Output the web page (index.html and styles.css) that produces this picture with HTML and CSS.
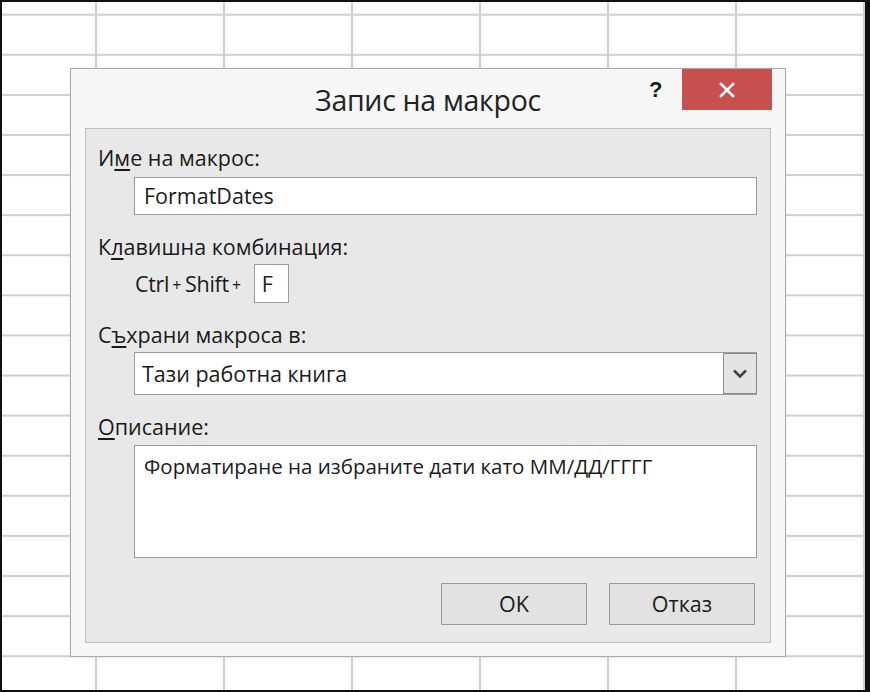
FILE: index.html
```html
<!DOCTYPE html>
<html lang="bg">
<head>
<meta charset="utf-8">
<title>Запис на макрос</title>
<link rel="stylesheet" href="styles.css">
</head>
<body>
<div class="screen">
  <div class="dialog">
    <div class="titlebar">
      <div class="title">Запис на макрос</div>
      <div class="help">?</div>
      <div class="close">
        <svg width="16" height="16" viewBox="0 0 16 16"><path d="M2 2 L14 14 M14 2 L2 14" stroke="#fff" stroke-width="2.6" stroke-linecap="square"/></svg>
      </div>
    </div>
    <div class="panel">
      <div class="label">И<span class="ak">м</span>е на макрос:</div>
      <div class="field text-field">FormatDates</div>
      <div class="label gap">К<span class="ak">л</span>авишна комбинация:</div>
      <div class="shortcut">
        <span class="keys">Ctrl<span class="plus">+</span>Shift<span class="plus">+</span></span>
        <span class="keybox">F</span>
      </div>
      <div class="label gap">С<span class="ak">ъ</span>храни макроса в:</div>
      <div class="field select">
        <span class="select-text">Тази работна книга</span>
        <span class="drop">
          <svg width="16" height="11" viewBox="0 0 16 11"><path d="M2 2.5 L8 8.5 L14 2.5" fill="none" stroke="#444" stroke-width="2.6"/></svg>
        </span>
      </div>
      <div class="label gap"><span class="ak">О</span>писание:</div>
      <div class="field textarea">Форматиране на избраните дати като ММ/ДД/ГГГГ</div>
      <div class="buttons">
        <div class="btn">OK</div>
        <div class="btn">Отказ</div>
      </div>
    </div>
  </div>
</div>
</body>
</html>
```

FILE: styles.css
```css
* { box-sizing: border-box; }
html, body { margin: 0; padding: 0; }
body {
  width: 870px;
  height: 692px;
  overflow: hidden;
  font-family: "Open Sans", "Noto Sans", "Liberation Sans", sans-serif;
  color: #1e1e1e;
}
.screen {
  position: relative;
  width: 870px;
  height: 692px;
  border-style: solid;
  border-color: #111;
  border-width: 2px 5px 2px 2px;
  background-color: #fff;
  background-image:
    linear-gradient(to right, transparent 92px, #cfcfcf 92px, #cfcfcf 94px, transparent 94px),
    linear-gradient(to bottom, transparent 12px, #cfcfcf 12px, #cfcfcf 14px, transparent 14px);
  background-size: 128px 100%, 100% 40.1px;
  background-repeat: repeat-x, repeat-y;
  background-position: 1px 0, 0 0;
}
.dialog {
  position: absolute;
  left: 68px;
  top: 66px;
  width: 716px;
  height: 589px;
  background: #f7f7f7;
  border: 1px solid #a9a9a9;
  box-shadow: 0 0 3px rgba(0,0,0,0.08);
  display: flex;
  flex-direction: column;
}
.titlebar {
  position: relative;
  height: 59px;
  display: flex;
  align-items: center;
  justify-content: center;
}
.title {
  font-size: 28.5px;
  font-weight: 400;
  color: #222;
  margin-top: 2px;
  letter-spacing: -0.3px;
}
.help {
  position: absolute;
  left: 578px;
  top: 8px;
  font-size: 22px;
  font-weight: 700;
  color: #1a1a1a;
  font-family: "Liberation Sans", sans-serif;
}
.close {
  position: absolute;
  left: 611px;
  top: 0;
  width: 90px;
  height: 41px;
  background: #c7504f;
  display: flex;
  align-items: center;
  justify-content: center;
}
.close svg { margin-top: 1px; }
.panel {
  margin: 0 14px 0 14px;
  height: 515px;
  background: #e8e8e8;
  border: 1px solid #bdbdbd;
  padding: 17px 13px 0 12px;
  display: flex;
  flex-direction: column;
}
.label {
  font-size: 21.5px;
  line-height: 24px;
  height: 24px;
  color: #1a1a1a;
}
.label.gap { margin-top: 20px; }
.ak { text-decoration: underline; text-underline-offset: 3px; text-decoration-thickness: 1.5px; }
.field {
  margin-left: 36px;
  width: 623px;
  background: #fff;
  border: 1px solid #9c9c9c;
  font-size: 21.5px;
  color: #1a1a1a;
}
.text-field {
  margin-top: 7px;
  height: 38px;
  line-height: 36px;
  padding-left: 9px;
}
.shortcut {
  margin-top: 5px;
  margin-left: 37px;
  height: 39px;
  display: flex;
  align-items: center;
}
.keys {
  font-size: 21.5px;
  color: #1a1a1a;
  letter-spacing: -0.3px;
}
.plus {
  margin: 0 4px 0 3px;
  font-size: 16px;
  position: relative;
  top: -1px;
}
.keybox {
  margin-left: 9px;
  width: 35px;
  height: 39px;
  background: #fff;
  border: 1px solid #9c9c9c;
  font-size: 21.5px;
  line-height: 37px;
  padding-left: 7px;
}
.select {
  margin-top: 5px;
  height: 43px;
  display: flex;
  align-items: center;
  justify-content: space-between;
  padding-left: 7px;
}
.select-text { line-height: 41px; }
.drop {
  width: 34px;
  height: 41px;
  margin-right: -1px;
  background: #e4e4e4;
  border: 1px solid #8a8a8a;
  display: flex;
  align-items: center;
  justify-content: center;
}
.textarea {
  margin-top: 6px;
  height: 113px;
  padding: 5px 9px;
  line-height: 30px;
  font-size: 20.5px;
}
.buttons {
  margin-top: 25px;
  display: flex;
  justify-content: flex-end;
  gap: 22px;
  padding-right: 2px;
}
.btn {
  width: 146px;
  height: 42px;
  background: #e2e2e2;
  border: 1px solid #999;
  font-size: 21.5px;
  line-height: 40px;
  text-align: center;
  color: #1a1a1a;
}
```
